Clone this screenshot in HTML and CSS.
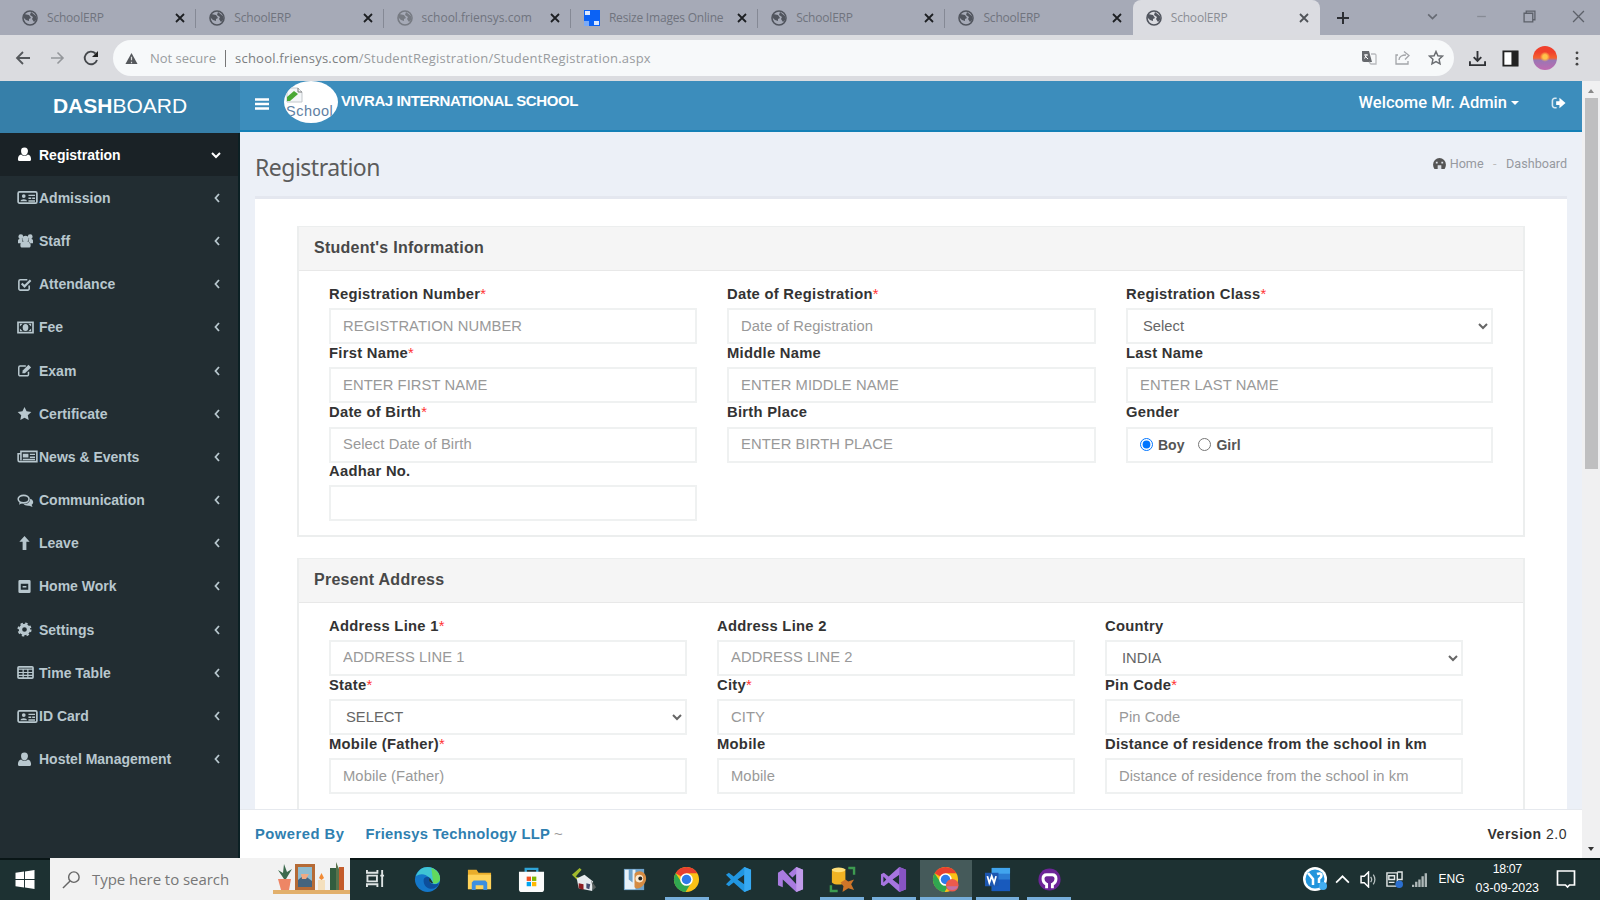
FILE: index.html
```html
<!DOCTYPE html>
<html lang="en">
<head>
  <meta charset="UTF-8">
  <title>SchoolERP</title>
  <link rel="stylesheet" href="styles.css">
</head>
<body>
  <svg class="sprite" width="0" height="0">
    <symbol id="globe" viewBox="0 0 16 16"><circle cx="8" cy="8" r="7" fill="none" stroke="currentColor" stroke-width="1.6"/><path d="M2 4l5 1 2 3-2 1v2l-3-1-3-3zM9 2l5 4v4l-2 2-2-3 1-2-3-2z" fill="currentColor"/></symbol>
    <symbol id="close" viewBox="0 0 10 10"><path d="M1 1l8 8M9 1l-8 8" stroke="currentColor" stroke-width="1.8"/></symbol>
    <symbol id="user" viewBox="0 0 16 16"><path d="M8 .5c2.600 0 3.700 1.600 3.700 3.800S10.300 9 8 9 4.300 7 4.300 4.300 5.400.5 8 .5zM4.500 8C5.500 10 10.500 10 11.500 8c2.300.4 3.500 2.500 3.500 5 0 1.500-1 2-2 2H3c-1 0-2-.5-2-2 0-2.500 1.200-4.600 3.500-5z" fill="currentColor"/></symbol>
    <symbol id="idcard" viewBox="0 0 22 16"><rect x="1" y="2" width="20" height="12" rx="1.500" fill="none" stroke="currentColor" stroke-width="1.800"/><circle cx="7" cy="6.500" r="2" fill="currentColor"/><path d="M3.500 12c0-3 7-3 7 0zM12 5h7v1.500h-7zM12 8h3v1.500h-3zM16 8h3v1.500h-3zM12 11h7v1.500h-7z" fill="currentColor"/></symbol>
    <symbol id="users" viewBox="0 0 18 16"><circle cx="4" cy="4" r="2.600" fill="currentColor"/><circle cx="14" cy="4" r="2.600" fill="currentColor"/><circle cx="9" cy="6" r="3.200" fill="currentColor"/><path d="M1 11V8c0-1.500 3-2 5-1l-1 4zM17 11V8c0-1.500-3-2-5-1l1 4zM3.500 13c0-6 11-6 11 0 0 2-1 2.500-2 2.500h-7c-1 0-2-.5-2-2.500z" fill="currentColor"/></symbol>
    <symbol id="check" viewBox="0 0 16 16"><path d="M13 9v3.500a1.500 1.500 0 0 1-1.500 1.500h-8A1.500 1.500 0 0 1 2 12.500v-8A1.500 1.500 0 0 1 3.500 3H11" fill="none" stroke="currentColor" stroke-width="1.700"/><path d="M5 7l3 3 6.500-6.500" fill="none" stroke="currentColor" stroke-width="2.300"/></symbol>
    <symbol id="money" viewBox="0 0 18 16"><rect x="1" y="2.500" width="16" height="11" fill="none" stroke="currentColor" stroke-width="1.800"/><ellipse cx="9" cy="8" rx="3" ry="3.800" fill="currentColor"/><path d="M3 4l3 0-3 3zM15 4v3l-3-3zM3 12V9l3 3zM15 12V9l-3 3z" fill="currentColor"/></symbol>
    <symbol id="pencil" viewBox="0 0 17 16"><path d="M13 9.500v3a1.500 1.500 0 0 1-1.500 1.500h-8A1.500 1.500 0 0 1 2 12.500v-8A1.500 1.500 0 0 1 3.500 3H10" fill="none" stroke="currentColor" stroke-width="1.700"/><path d="M6 11l.5-3L13 1.500 16 4.500 9 11z" fill="currentColor"/></symbol>
    <symbol id="star" viewBox="0 0 16 16"><path d="M8 1l2.200 4.700 5.100.6-3.800 3.500 1 5.100L8 12.400 3.500 14.900l1-5.100L.7 6.300l5.100-.6z" fill="currentColor"/></symbol>
    <symbol id="news" viewBox="0 0 22 16"><path d="M4 2.500h17v11H2.500A1.500 1.500 0 0 1 1 12V5h3zM4 5v7" fill="none" stroke="currentColor" stroke-width="1.700"/><path d="M6 5h6v4H6zM13.500 5H19v1.500h-5.500zM13.500 8H19v1.500h-5.500zM6 10.500h13V12H6z" fill="currentColor"/></symbol>
    <symbol id="chat" viewBox="0 0 18 16"><ellipse cx="7" cy="6.500" rx="5.800" ry="4" fill="none" stroke="currentColor" stroke-width="1.700"/><path d="M3 9.500L2 12.500l4-2zM14 6c4 1.500 4 5 1.500 6.500l1 2.500-3.500-1.500c-3 .3-5-.5-6-1.700 4 0 7-2 7-5.800z" fill="currentColor"/></symbol>
    <symbol id="up" viewBox="0 0 16 16"><path d="M8 0l5.500 6H10v9H6V6H2.500z" fill="currentColor"/></symbol>
    <symbol id="book" viewBox="0 0 16 16"><path fill-rule="evenodd" d="M3 1h10a1.500 1.500 0 0 1 1.500 1.500v11A1.500 1.500 0 0 1 13 15H3a1.500 1.500 0 0 1-1.500-1.500v-11A1.500 1.500 0 0 1 3 1zm1 4v6.500h8V5zM6 7.500h4V9H6z" fill="currentColor"/></symbol>
    <symbol id="gear" viewBox="0 0 16 16"><circle cx="8" cy="8" r="4.300" fill="none" stroke="currentColor" stroke-width="3.600"/><circle cx="8" cy="8" r="6.500" fill="none" stroke="currentColor" stroke-width="2" stroke-dasharray="2.600 2.500"/></symbol>
    <symbol id="table" viewBox="0 0 18 16"><rect x="1" y="2" width="16" height="12" rx="1" fill="none" stroke="currentColor" stroke-width="1.800"/><path d="M1 4.500h16M1 8h16M1 11h16M6.500 4v10M11.500 4v10" stroke="currentColor" stroke-width="1.300"/></symbol>
    <symbol id="left" viewBox="0 0 8 12"><path d="M6 2L2.500 6 6 10" fill="none" stroke="currentColor" stroke-width="1.800"/></symbol>
    <symbol id="chrome" viewBox="0 0 28 28"><circle cx="14" cy="14" r="13" fill="#fbc116"/><path d="M14 14L2.700 7.500A13 13 0 0 1 25.300 7.500H14z" fill="#e8402f"/><path d="M2.700 7.500A13 13 0 0 0 13 27l6-10-10 0z" fill="#30a750"/><circle cx="14" cy="14" r="6.500" fill="#fff"/><circle cx="14" cy="14" r="4.900" fill="#2e7bea"/></symbol>
    <symbol id="vs" viewBox="0 0 28 28"><path d="M20 1l7 3v20l-7 3L9 17l-5 4-3-1.500v-11L4 7l5 4zM20 9l-7 5 7 5.500zM3.500 11v6l3-3z" fill="#a775e0" fill-rule="evenodd"/><path d="M20 1l7 3v20l-7 3z" fill="#8754c4"/></symbol>
  </svg>

  <div class="tabstrip">
    <div class="tab"><svg class="favicon"><use href="#globe"/></svg><span>SchoolERP</span><svg class="x"><use href="#close"/></svg></div>
    <div class="tab"><svg class="favicon"><use href="#globe"/></svg><span>SchoolERP</span><svg class="x"><use href="#close"/></svg></div>
    <div class="tab"><svg class="favicon light"><use href="#globe"/></svg><span class="tab-host">school.friensys.com</span><svg class="x"><use href="#close"/></svg></div>
    <div class="tab"><svg class="favicon" viewBox="0 0 16 16"><path d="M0 0h16v16H0z" fill="#0b62f5"/><path d="M1 1h5v4H1zM10 11h5v4h-5z" fill="#dce8ff"/><path d="M0 11h5v5H0z" fill="#7baaf7"/></svg><span class="tab-resize">Resize Images Online</span><svg class="x"><use href="#close"/></svg></div>
    <div class="tab"><svg class="favicon"><use href="#globe"/></svg><span>SchoolERP</span><svg class="x"><use href="#close"/></svg></div>
    <div class="tab last"><svg class="favicon"><use href="#globe"/></svg><span>SchoolERP</span><svg class="x"><use href="#close"/></svg></div>
    <div class="tab active"><svg class="favicon"><use href="#globe"/></svg><span>SchoolERP</span><svg class="x"><use href="#close"/></svg></div>
    <svg class="plus" viewBox="0 0 14 14"><path d="M7 1v12M1 7h12" stroke="#2c2e33" stroke-width="2"/></svg>
    <div class="window-buttons">
      <svg viewBox="0 0 12 12"><path d="M2 4l4 4 4-4" fill="none" stroke="#666a73" stroke-width="1.500"/></svg>
      <svg viewBox="0 0 12 12"><path d="M2 6h8" stroke="#878b95" stroke-width="1.200"/></svg>
      <svg viewBox="0 0 12 12"><path d="M1 3h8v8H1zM3 3V1h8v8H9" fill="none" stroke="#5d616a" stroke-width="1.200"/></svg>
      <svg viewBox="0 0 12 12"><path d="M1 1l10 10M11 1L1 11" stroke="#5d616a" stroke-width="1.200"/></svg>
    </div>
  </div>

  <div class="toolbar">
    <div class="nav-buttons">
      <svg viewBox="0 0 16 16"><path d="M15 8H2M8 2L2 8l6 6" fill="none" stroke="#55585c" stroke-width="1.800"/></svg>
      <svg viewBox="0 0 16 16"><path d="M2 8h12M8.500 2.500L14 8l-5.500 5.500" fill="none" stroke="#94979b" stroke-width="1.600"/></svg>
      <svg viewBox="0 0 16 16"><path d="M14 10A6.300 6.300 0 1 1 12.500 3.500" fill="none" stroke="#44474b" stroke-width="1.900"/><path d="M15 1v6H9z" fill="#222"/></svg>
    </div>
    <div class="omnibox">
      <svg class="warn" viewBox="0 0 14 14"><path d="M7 1l6.500 12H.5z" fill="#55585c"/><path d="M7 5v4M7 10.500V12" stroke="#ddd" stroke-width="1.300"/></svg>
      <span class="insecure">Not secure</span>
      <span class="url"><b>school.friensys.com</b>/StudentRegistration/StudentRegistration.aspx</span>
      <svg class="omni-icon" viewBox="0 0 16 16"><path d="M1 1h7l3 11H3a2 2 0 0 1-2-2z" fill="#66696d"/><path d="M3 5h4M5 4v1c0 2-1 3-2 3.500M4 6l3 3" stroke="#fff" fill="none"/><path d="M10 4h4l1 1v9h-5l-2-2" fill="none" stroke="#b9bbbe" stroke-width="1.300"/></svg>
      <svg class="omni-icon" viewBox="0 0 16 16"><path d="M3 5H1v9h12v-3M4 10c0-3 3-5 7-5M9 1.500L14 5.500l-4 4" fill="none" stroke="#a3a5a9" stroke-width="1.300"/></svg>
      <svg class="omni-icon" viewBox="0 0 16 16"><path d="M8 1.500l1.900 4.200 4.600.5-3.400 3.100.9 4.500L8 11.500l-4 2.300.9-4.500L1.500 6.200l4.600-.5z" fill="none" stroke="#6a6d71" stroke-width="1.500"/></svg>
    </div>
    <div class="extras">
      <svg viewBox="0 0 18 18"><path d="M9 1v10M5 7.500l4 4 4-4M1 12v4h16v-4" fill="none" stroke="#303236" stroke-width="2"/></svg>
      <svg viewBox="0 0 18 18"><path d="M1.500 1.500h15v15h-15z" fill="#fff" stroke="#222" stroke-width="2"/><path d="M10 1h7v16h-7z" fill="#222"/></svg>
      <span class="avatar"></span>
      <svg class="dots" viewBox="0 0 4 18"><circle cx="2" cy="3" r="1.500"/><circle cx="2" cy="9" r="1.500"/><circle cx="2" cy="15" r="1.500"/></svg>
    </div>
  </div>

  <div class="page">
    <aside class="sidebar">
      <div class="logo"><b>DASH</b>BOARD</div>
      <ul class="menu">
        <li class="active"><svg class="icon"><use href="#user"/></svg><span>Registration</span><svg class="down" viewBox="0 0 12 8"><path d="M2 2l4 4 4-4" fill="none" stroke="currentColor" stroke-width="2"/></svg></li>
        <li><svg class="icon wide"><use href="#idcard"/></svg><span>Admission</span><svg class="angle"><use href="#left"/></svg></li>
        <li><svg class="icon mid"><use href="#users"/></svg><span>Staff</span><svg class="angle"><use href="#left"/></svg></li>
        <li><svg class="icon"><use href="#check"/></svg><span>Attendance</span><svg class="angle"><use href="#left"/></svg></li>
        <li><svg class="icon mid"><use href="#money"/></svg><span>Fee</span><svg class="angle"><use href="#left"/></svg></li>
        <li><svg class="icon"><use href="#pencil"/></svg><span>Exam</span><svg class="angle"><use href="#left"/></svg></li>
        <li><svg class="icon"><use href="#star"/></svg><span>Certificate</span><svg class="angle"><use href="#left"/></svg></li>
        <li><svg class="icon wide"><use href="#news"/></svg><span>News &amp; Events</span><svg class="angle"><use href="#left"/></svg></li>
        <li><svg class="icon mid"><use href="#chat"/></svg><span>Communication</span><svg class="angle"><use href="#left"/></svg></li>
        <li><svg class="icon"><use href="#up"/></svg><span>Leave</span><svg class="angle"><use href="#left"/></svg></li>
        <li><svg class="icon"><use href="#book"/></svg><span>Home Work</span><svg class="angle"><use href="#left"/></svg></li>
        <li><svg class="icon"><use href="#gear"/></svg><span>Settings</span><svg class="angle"><use href="#left"/></svg></li>
        <li><svg class="icon mid"><use href="#table"/></svg><span>Time Table</span><svg class="angle"><use href="#left"/></svg></li>
        <li><svg class="icon wide"><use href="#idcard"/></svg><span>ID Card</span><svg class="angle"><use href="#left"/></svg></li>
        <li><svg class="icon"><use href="#user"/></svg><span>Hostel Management</span><svg class="angle"><use href="#left"/></svg></li>
      </ul>
    </aside>

    <div class="main">
      <header class="navbar">
        <svg class="bars" viewBox="0 0 14 12"><path d="M0 1.500h14M0 6h14M0 10.500h14" stroke="#fff" stroke-width="2.600"/></svg>
        <div class="school-logo">
          <svg viewBox="0 0 18 16"><path d="M1 1h11l4 4v10H1z" fill="#f4f6f8" stroke="#c3c8cc"/><path d="M1 10l7-6 4 3-8 7H1z" fill="#4aa835"/><path d="M12 1v4h4" fill="none" stroke="#777"/></svg>
          <span>School</span>
        </div>
        <span class="school-name">VIVRAJ INTERNATIONAL SCHOOL</span>
        <span class="welcome">Welcome Mr. Admin</span>
        <span class="caret"></span>
        <svg class="logout" viewBox="0 0 16 14"><path d="M6 2H4a2.500 2.500 0 0 0-2.500 2.500v5A2.500 2.500 0 0 0 4 12h2" fill="none" stroke="#d6e8f2" stroke-width="1.700"/><path d="M5.500 5H9V1.500L15.500 7 9 12.500V9H5.500z" fill="#fff"/></svg>
      </header>

      <div class="content">
        <div class="content-header">
          <h1>Registration</h1>
          <div class="breadcrumb">
            <svg viewBox="0 0 14 12"><path d="M7 0a7 7 0 0 1 7 7c0 2-.6 3.500-1.500 5h-11A8 8 0 0 1 0 7a7 7 0 0 1 7-7z" fill="#555"/><path d="M5 12V8h4v4zM3 4h2v2H3zM9 4h2v2H9z" fill="#dde1e8"/></svg>
            <span class="home">Home</span><span class="dash">-</span><span class="here">Dashboard</span>
          </div>
        </div>
        <div class="box">
          <div class="panel">
            <div class="panel-heading">Student's Information</div>
            <div class="panel-body">
              <div class="field"><label>Registration Number<i>*</i></label><input type="text" placeholder="REGISTRATION NUMBER"></div>
              <div class="field"><label>Date of Registration<i>*</i></label><input type="text" placeholder="Date of Registration"></div>
              <div class="field"><label>Registration Class<i>*</i></label><select><option>Select</option></select></div>
              <div class="field"><label>First Name<i>*</i></label><input type="text" placeholder="ENTER FIRST NAME"></div>
              <div class="field"><label>Middle Name</label><input type="text" placeholder="ENTER MIDDLE NAME"></div>
              <div class="field"><label>Last Name</label><input type="text" placeholder="ENTER LAST NAME"></div>
              <div class="field"><label>Date of Birth<i>*</i></label><input type="text" placeholder="Select Date of Birth"></div>
              <div class="field"><label>Birth Place</label><input type="text" placeholder="ENTER BIRTH PLACE"></div>
              <div class="field"><label>Gender</label>
                <div class="radios"><input type="radio" name="gender" checked><b>Boy</b><input type="radio" name="gender"><b>Girl</b></div>
              </div>
              <div class="field aadhar"><label>Aadhar No.</label><input type="text"></div>
            </div>
          </div>
          <div class="panel">
            <div class="panel-heading">Present Address</div>
            <div class="panel-body address">
              <div class="field"><label>Address Line 1<i>*</i></label><input type="text" placeholder="ADDRESS LINE 1"></div>
              <div class="field"><label>Address Line 2</label><input type="text" placeholder="ADDRESS LINE 2"></div>
              <div class="field"><label>Country</label><select><option>INDIA</option></select></div>
              <div class="field"><label>State<i>*</i></label><select><option>SELECT</option></select></div>
              <div class="field"><label>City<i>*</i></label><input type="text" placeholder="CITY"></div>
              <div class="field"><label>Pin Code<i>*</i></label><input type="text" placeholder="Pin Code"></div>
              <div class="field"><label>Mobile (Father)<i>*</i></label><input type="text" placeholder="Mobile (Father)"></div>
              <div class="field"><label>Mobile</label><input type="text" placeholder="Mobile"></div>
              <div class="field"><label>Distance of residence from the school in km</label><input type="text" placeholder="Distance of residence from the school in km"></div>
            </div>
          </div>
        </div>
      </div>

      <footer class="footer">
        <span class="powered">Powered By</span><span class="company">Friensys Technology LLP</span><span class="tilde">~</span>
        <span class="version"><b>Version</b> 2.0</span>
      </footer>
    </div>

    <div class="scrollbar">
      <span class="arrow-up"></span>
      <div class="thumb"></div>
      <span class="arrow-down"></span>
    </div>
  </div>

  <div class="taskbar">
    <div class="start"><svg viewBox="0 0 20 20"><path d="M0 3l9-1.300V9.500H0zM10 1.500L20 0v9.500H10zM0 10.500h9v7.800L0 17zM10 10.500h10V20l-10-1.500z" fill="#fff"/></svg></div>
    <div class="search">
      <svg class="lens" viewBox="0 0 20 20"><circle cx="12.500" cy="7.500" r="5.500" fill="none" stroke="#666" stroke-width="1.500"/><path d="M8.500 11.500L1 19" stroke="#666" stroke-width="1.500"/></svg>
      <span>Type here to search</span>
      <svg class="shelf" viewBox="0 0 77 34"><path d="M0 28h77v4H0z" fill="#e2b06c"/><path d="M5 17h13l-2 11H8z" fill="#ee8665"/><path d="M11 17L5 8l5 3 1-9 3 8 5-3-6 10z" fill="#3d6b4e"/><path d="M22 2h20v26H22z" fill="#b56a35"/><path d="M25 5h14v20H25z" fill="#8fbcd0"/><path d="M25 18l6-5 8 6v6H25z" fill="#45647e"/><path d="M28 12h8l-3 5h-4z" fill="#f0a982"/><path d="M45 18h7v10h-7z" fill="#f4e0bd"/><path d="M48.500 11l2.500 5-2.500 2-2.500-2z" fill="#f18a35"/><path d="M57 6h6v22h-6z" fill="#335d3f"/><path d="M63 0l3 7v21h-3z" fill="#58734c"/><path d="M66 5h5v23h-5z" fill="#c45c2b"/></svg>
    </div>
    <div class="apps">
      <div class="app"><svg class="small" viewBox="0 0 20 20"><path d="M1 1v3h11V1M1 19v-3h11v3M1.500 7h10v6h-10zM17 1v18M15 7h4" fill="none" stroke="#dde3e3" stroke-width="2"/></svg></div>
      <div class="app"><svg viewBox="0 0 28 28"><circle cx="14" cy="14" r="13" fill="#1477c9"/><path d="M2 11C4 4 9 1 14 1c8 0 13 6 13 12 0 5-5 7-9 5-3-1-1-3-2-5-3-5-10-6-14-2z" fill="#3fc4d4"/><path d="M18 2c6 2 9 7 9 11 0 4-4 6-7 5z" fill="#62d95c"/><path d="M10 14c1-3 5-4 7-1-2 2-1 5 3 6 3 0 5 0 6-1-3 9-17 7-16-4z" fill="#0d4f9c"/><path d="M16 13c-1 2 0 5 4 5l-3-5z" fill="#1d3433"/></svg></div>
      <div class="app"><svg viewBox="0 0 28 28"><path d="M2 4h9l2 3h13v17H2z" fill="#e9ad2b"/><path d="M2 9h24v15H2z" fill="#ffd35a"/><path d="M6 25v-8l2-2h12l2 2v8h-4v-5h-8v5z" fill="#3d8fe0"/></svg></div>
      <div class="app"><svg viewBox="0 0 28 28"><path d="M8 7V3h12v4" fill="none" stroke="#2fa5d8" stroke-width="2.400"/><path d="M1 6h26v18a3 3 0 0 1-3 3H4a3 3 0 0 1-3-3z" fill="#fbfbfb"/><path d="M9 11h4.500v4.500H9z" fill="#f25022"/><path d="M14.500 11H19v4.500h-4.500z" fill="#7fba00"/><path d="M9 16.500h4.500V21H9z" fill="#00a4ef"/><path d="M14.500 16.500H19V21h-4.500z" fill="#ffb900"/></svg></div>
      <div class="app"><svg viewBox="0 0 28 28"><path d="M2 9l8-7 2 2-6 7 5 2-3 2z" fill="#a2b92c"/><path d="M7 13l8-4 9 7-1 10-14-3z" fill="#e7ebee"/><path d="M9 18l5 1v6l-5-2z" fill="#8c1c21"/><path d="M17 18l4 1-1 5-3-1z" fill="#444c6e"/><path d="M22 15l5 7-3 3z" fill="#59605f"/></svg></div>
      <div class="app"><svg viewBox="0 0 28 28"><path d="M3 3h21v22H3z" fill="#6fa3cb"/><path d="M4 4h4v10l4 3V4h3v20H4z" fill="#e8f1f8"/><path d="M14 8c6-6 13 0 12 6s-8 12-12 8z" fill="#d58b43"/><circle cx="19" cy="13" r="4" fill="#fae9d0"/><circle cx="20" cy="13" r="2" fill="#222"/></svg></div>
      <div class="app open"><svg viewBox="0 0 28 28"><use href="#chrome"/></svg></div>
      <div class="app"><svg viewBox="0 0 28 28"><path d="M20 1l7 3v20l-7 3L9 17l-5 4-3-2 5-5-5-5 3-2 5 4zM20 9l-7 5 7 5z" fill="#2196e0" fill-rule="evenodd"/><path d="M20 1l7 3v20l-7 3z" fill="#36a9f2"/></svg></div>
      <div class="app"><svg viewBox="0 0 28 28"><path d="M1 7l5-3 14 15V8l-4 4-4-4 8-7 7 3v20l-7 3L6 14v8l-5-2z" fill="#a97be0"/><path d="M20 1l7 3v20l-7 3z" fill="#c19bea"/></svg></div>
      <div class="app open"><svg viewBox="0 0 28 28"><path d="M3 3v14c3 3 11 3 14 0V3z" fill="#f0b323"/><ellipse cx="10" cy="4" rx="7" ry="2.500" fill="#ffe07a"/><path d="M20 2h6v7M2 20v6h7" fill="none" stroke="#3d9b50" stroke-width="2.500"/><path d="M12 17l5-3 3 2 6-2-3 5 3 6-6-2-6 4 1-6z" fill="#ce7529"/></svg></div>
      <div class="app open"><svg viewBox="0 0 28 28"><use href="#vs"/></svg></div>
      <div class="app open current"><svg viewBox="0 0 28 28"><use href="#chrome"/><circle cx="21" cy="20" r="6.500" fill="#ec5a4c"/><path d="M15 21h12a6.500 6.500 0 0 1-12 0z" fill="#c271a5"/></svg></div>
      <div class="app open"><svg viewBox="0 0 28 28"><path d="M8 2h19v24H8z" fill="#2b7cd3"/><path d="M8 2h19v6H8z" fill="#41a5ee"/><path d="M8 14h19v12H8z" fill="#185abd"/><path d="M1 7h14v14H1z" fill="#1c56b0"/><path d="M3.500 10.500l2 7 2.500-7 2.500 7 2-7" fill="none" stroke="#fff" stroke-width="1.800"/></svg></div>
      <div class="app open"><svg viewBox="0 0 28 28"><circle cx="14" cy="14" r="11.500" fill="#6d2498"/><path d="M11 23v-4c-5-2-5-10 0-10h6c5 0 5 8 0 10v4" fill="none" stroke="#fff" stroke-width="3"/></svg></div>
    </div>
    <div class="tray">
      <svg class="help" viewBox="0 0 24 24"><circle cx="12" cy="12" r="12" fill="#fff"/><circle cx="12" cy="12" r="9.500" fill="#2395dc"/><path d="M5 6l5 6v6M14 7c5-2 6 2 2 5v4" fill="none" stroke="#fff" stroke-width="2.500"/><circle cx="20" cy="19" r="4" fill="#43aef0"/></svg>
      <svg viewBox="0 0 16 16"><path d="M2 11l6-6 6 6" fill="none" stroke="#fff" stroke-width="1.600"/></svg>
      <svg viewBox="0 0 16 16"><path d="M1 5h3l4-4v14l-4-4H1z" fill="none" stroke="#fff" stroke-width="1.400"/><path d="M10 5.500q2 2.500 0 5M12.500 3.500q3 4.500 0 9" fill="none" stroke="#b7c0c0" stroke-width="1.200"/></svg>
      <svg viewBox="0 0 18 18"><path d="M1 2h11v14H1zM3 5h6v4H3zM3 12h6M12 1h5v8h-5" fill="none" stroke="#e4e9e9" stroke-width="1.500"/><circle cx="14" cy="14" r="4" fill="#2b6fd0"/></svg>
      <svg viewBox="0 0 16 16"><path d="M1 15v-2M4 15v-5M7 15V8M10 15V5M13 15V2" stroke="#aeb8b8" stroke-width="2.200"/></svg>
      <span class="lang">ENG</span>
      <div class="clock"><span class="time">18:07</span><span>03-09-2023</span></div>
      <svg class="notice" viewBox="0 0 20 20"><path d="M1.500 2h17v14h-5l-2 2-2-2h-8z" fill="none" stroke="#fff" stroke-width="1.700"/></svg>
    </div>
  </div>
</body>
</html>
```
FILE: styles.css
```css
* {
  box-sizing: border-box;
}
body {
  margin: 0;
  width: 1600px;
  height: 900px;
  overflow: hidden;
  display: flex;
  flex-direction: column;
  font-family: "Liberation Sans", Arial, sans-serif;
  font-size: 14.75px;
  color: #333;
}
svg {
  display: block;
  flex: none;
}
.sprite {
  position: absolute;
}

/* browser tabs */
.tabstrip {
  height: 35px;
  flex: none;
  display: flex;
  align-items: center;
  background: #a6aab7;
  padding-left: 9px;
  font-family: "Open Sans", sans-serif;
  font-size: 12px;
  color: #70747e;
}
.tab {
  width: 187.3px;
  height: 35px;
  display: flex;
  align-items: center;
  padding: 0 10px 0 13px;
  position: relative;
}
.tab::after {
  content: "";
  position: absolute;
  right: 0;
  top: 9px;
  width: 1px;
  height: 19px;
  background: #858995;
}
.tab.last::after,
.tab.active::after {
  display: none;
}
.tab span {
  flex: 1;
  margin-left: 9px;
  white-space: nowrap;
  letter-spacing: -0.2px;
}
.tab .tab-host {
  letter-spacing: 0;
}
.tab .tab-resize {
  letter-spacing: -0.2px;
}
.tab.active {
  background: #dbdce1;
  border-radius: 8px 8px 0 0;
  color: #8b8e95;
}
.favicon {
  width: 16px;
  height: 16px;
  color: #51555e;
}
.favicon.light {
  color: #777b83;
}
.x {
  width: 10px;
  height: 10px;
  color: #1d1f23;
  margin-right: 1px;
}
.active .x {
  color: #505358;
}
.plus {
  width: 14px;
  height: 14px;
  margin-left: 16px;
}
.window-buttons {
  margin-left: auto;
  width: 182px;
  padding: 0 16px 3px 8px;
  display: flex;
  gap: 35.5px;
}
.window-buttons svg {
  width: 13px;
  height: 13px;
}

/* address bar */
.toolbar {
  height: 46px;
  flex: none;
  display: flex;
  align-items: center;
  background: #dbdce0;
}
.nav-buttons {
  display: flex;
  gap: 18px;
  width: 113px;
  padding-left: 15px;
}
.nav-buttons svg {
  width: 16px;
  height: 16px;
}
.omnibox {
  width: 1341px;
  height: 36px;
  border-radius: 18px;
  background: #f7f9fa;
  display: flex;
  align-items: center;
  padding: 0 10px 0 12px;
  font-family: "Open Sans", sans-serif;
  font-size: 13px;
  color: #999c9f;
}
.warn {
  width: 13px;
  height: 13px;
}
.insecure {
  width: 76px;
  margin-left: 12px;
  border-right: 1px solid #777;
  line-height: 17px;
}
.url {
  flex: 1;
  margin-left: 9px;
  letter-spacing: 0.23px;
}
.url b {
  font-weight: normal;
  color: #7b7e81;
}
.omni-icon {
  width: 16px;
  height: 16px;
  margin-left: 17.5px;
}
.extras {
  display: flex;
  align-items: center;
  margin-left: 15px;
  gap: 16px;
}
.extras svg {
  width: 17px;
  height: 17px;
}
.extras .dots {
  width: 4px;
  fill: #444;
}
.avatar {
  width: 24px;
  height: 24px;
  margin: 0 2px 0 -2px;
  border-radius: 50%;
  background: radial-gradient(circle at 50% 45%, #ffc34b 0 12%, transparent 28%), linear-gradient(#f0402c 25%, #f4622f 50%, #9a76b4 60%, #c06ab0);
}

/* page */
.page {
  height: 777px;
  flex: none;
  display: flex;
}
.sidebar {
  width: 240px;
  background: #222d32;
  border-right: 2px solid #0c2024;
}
.logo {
  width: 240px;
  height: 52px;
  background: #367fa9;
  color: #fff;
  font-size: 21px;
  line-height: 50px;
  text-align: center;
}
.menu {
  list-style: none;
  margin: 0;
  padding: 0;
}
.menu li {
  height: 43.2px;
  display: flex;
  align-items: center;
  padding: 0 17px 0 17px;
  color: #b8c7ce;
  font-size: 14px;
  font-weight: bold;
}
.menu li.active {
  background: #1a2226;
  color: #fff;
}
.menu span {
  flex: 1;
}
.icon {
  width: 15px;
  height: 15px;
  margin-right: 7px;
}
.icon.mid {
  width: 17px;
  margin-right: 5px;
}
.icon.wide {
  width: 21px;
  margin-right: 1px;
}
.angle {
  width: 8px;
  height: 12px;
}
.down {
  width: 12px;
  height: 8px;
  margin-right: -1px;
}

.main {
  width: 1342px;
  display: flex;
  flex-direction: column;
}
.navbar {
  height: 51px;
  flex: none;
  display: flex;
  background: #3c8dbc;
  border-bottom: 2px solid #1480b6;
  color: #fff;
  font-weight: bold;
  padding: 0 15px;
}
.bars {
  width: 14px;
  height: 12px;
  margin: 17px 15px 0 0;
}
.school-logo {
  width: 54px;
  height: 42px;
  border-radius: 50%;
  background: #fff;
  overflow: hidden;
  color: #5f7fa3;
  font-size: 14.5px;
  font-weight: normal;
  padding: 6px 0 0 2px;
}
.school-logo svg {
  width: 18px;
  height: 16px;
}
.school-logo span {
  display: block;
  line-height: 16px;
  letter-spacing: 0.5px;
}
.school-name {
  margin-left: 3px;
  flex: 1;
  line-height: 40px;
  font-size: 15px;
  letter-spacing: -0.4px;
}
.welcome {
  font-family: Roboto, sans-serif;
  font-weight: 500;
  font-size: 16.5px;
  line-height: 43px;
}
.caret {
  margin: 20px 32px 0 4px;
  width: 0;
  height: 0;
  border: 4px solid transparent;
  border-top-color: #fff;
  border-bottom: 0;
}
.logout {
  width: 15px;
  height: 14px;
  margin: 15px 1px 0 0;
}

.content {
  height: 677px;
  flex: none;
  overflow: hidden;
  background: #ecf0f7;
  padding: 0 15px;
}
.content-header {
  height: 64px;
  display: flex;
  justify-content: space-between;
}
h1 {
  margin: 0;
  font-family: "Noto Sans", sans-serif;
  font-weight: normal;
  font-size: 23px;
  line-height: 71px;
  letter-spacing: -0.5px;
  color: #5c5c5c;
}
.breadcrumb {
  display: flex;
  height: 62px;
  align-items: center;
  font-family: Roboto, sans-serif;
  font-size: 12.6px;
  color: #96999f;
}
.breadcrumb svg {
  width: 13px;
  height: 11px;
  margin-right: 4px;
}
.dash {
  margin: 0 9.5px;
  color: #bbb;
}
.box {
  border-top: 3px solid #e4e7ef;
  background: #fff;
  padding: 27px 42px;
  height: 700px;
}
.panel {
  border: 1px solid #eceeee;
  border-width: 1px 2px 2px;
  margin-bottom: 21px;
}
.panel-heading {
  height: 44px;
  background: #f5f5f5;
  border-bottom: 1px solid #e8e8e8;
  padding-left: 15px;
  font-size: 16px;
  font-weight: bold;
  letter-spacing: 0.25px;
  line-height: 42px;
  color: #484848;
}
.panel-body {
  display: grid;
  grid-template-columns: 368px 369px 367px;
  column-gap: 30px;
  padding: 14px 30px 13px;
}
.address {
  grid-template-columns: repeat(3, 358px);
  padding-bottom: 40px;
}
.field {
  height: 59.2px;
}
.aadhar {
  margin-top: -1px;
  height: 60.2px;
}
label {
  display: block;
  height: 23.2px;
  line-height: 18px;
  font-weight: bold;
  letter-spacing: 0.28px;
  white-space: nowrap;
}
label i {
  color: #f33;
  font-style: normal;
  font-weight: normal;
  letter-spacing: 0;
}
input[type="text"],
select,
.radios {
  display: block;
  width: 100%;
  height: 36px;
  border: 2px solid #eff1f1;
  border-radius: 0;
  background: #fff;
  padding: 0 12px;
  font-family: inherit;
  font-size: 14.75px;
  color: #666;
  outline: none;
}
input[type="text"] {
  padding-bottom: 1px;
  letter-spacing: 0.08px;
}
select {
  padding: 0 3px 0 11px;
}
input::placeholder {
  color: #999;
}
.radios {
  display: flex;
  align-items: center;
  font-size: 14px;
  color: #555;
}
.radios input {
  width: 13px;
  height: 13px;
  margin: 0 5px 0 0;
}
.radios b + input {
  margin-left: 14px;
}

.footer {
  height: 49px;
  flex: none;
  border-top: 1px solid #e6e9ee;
  background: #fff;
  display: flex;
  align-items: center;
  padding: 0 15px;
  letter-spacing: 0.5px;
}
.powered,
.company {
  color: #2f7fb0;
  font-weight: bold;
}
.company {
  margin-left: 21px;
  letter-spacing: 0.27px;
}
.tilde {
  margin-left: 4px;
  color: #999;
}
.version {
  margin-left: auto;
  font-size: 14px;
}

.scrollbar {
  width: 18px;
  background: #f0f0f1;
  display: flex;
  flex-direction: column;
  align-items: center;
}
.thumb {
  width: 13px;
  height: 371px;
  background: #bfbfc0;
}
.arrow-up,
.arrow-down {
  width: 0;
  height: 0;
  border: 3px solid transparent;
}
.arrow-up {
  border-bottom: 4px solid #888;
  margin: 5px 0 5px;
}
.arrow-down {
  border-top: 4px solid #333;
  margin: auto 0 4px;
}

/* windows taskbar */
.taskbar {
  height: 42px;
  flex: none;
  display: flex;
  background: #1d3132;
  border-top: 2px solid #0a1617;
  color: #fff;
}
.start {
  width: 50px;
  padding: 10px 0 0 15px;
}
.start svg {
  width: 20px;
  height: 19px;
}
.search {
  width: 300px;
  height: 42px;
  margin-top: -2px;
  background: #f2f2f2;
  display: flex;
  align-items: center;
  padding-left: 12px;
  font-family: "Open Sans", sans-serif;
  font-size: 15px;
  color: #777;
}
.search span {
  margin-left: 11px;
  letter-spacing: -0.05px;
  white-space: nowrap;
}
.lens {
  width: 19px;
  height: 19px;
}
.shelf {
  width: 77px;
  height: 34px;
  margin-left: auto;
}
.apps {
  display: grid;
  grid-template-columns: repeat(14, 51.8px);
}
.app {
  display: flex;
  justify-content: center;
  padding-top: 6px;
  position: relative;
}
.app svg {
  width: 27px;
  height: 27px;
}
.app .small {
  width: 19px;
  height: 19px;
  margin-top: 3px;
}
.app.open::after {
  content: "";
  position: absolute;
  left: 4px;
  right: 4px;
  bottom: 0;
  height: 3px;
  background: #76aedb;
}
.app.current {
  background: #455a5a;
}
.app.current::after {
  left: 0;
  right: 0;
}
.tray {
  margin-left: auto;
  display: flex;
  align-items: center;
  gap: 9px;
  padding: 0 24px 2px 0;
}
.tray svg {
  width: 17px;
  height: 17px;
}
.tray .help {
  width: 24px;
  height: 24px;
  margin-right: -2px;
}
.tray .notice {
  width: 20px;
  height: 20px;
  margin-left: 8px;
}
.lang {
  font-size: 12px;
  margin-left: 1px;
}
.clock {
  display: flex;
  flex-direction: column;
  align-items: center;
  font-size: 12.4px;
  line-height: 19px;
  margin-left: 2px;
}
.time {
  letter-spacing: -0.4px;
}
```
